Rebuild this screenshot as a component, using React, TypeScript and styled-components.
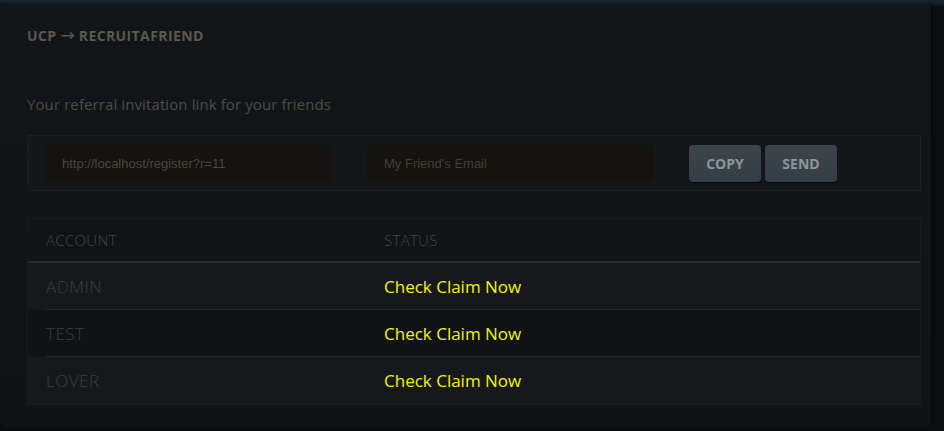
import React, { useState } from 'react';
import styled, { createGlobalStyle } from 'styled-components';

const GlobalStyle = createGlobalStyle`
  html, body {
    margin: 0;
    padding: 0;
    background: #0c0f11;
  }
  * {
    box-sizing: border-box;
  }
`;

const Page = styled.div`
  width: 944px;
  height: 431px;
  overflow: hidden;
  background: linear-gradient(180deg, #1a2631 0px, #131c24 5px, #0c0f11 6px);
  padding-top: 5px;
  font-family: 'Open Sans', 'Liberation Sans', sans-serif;
`;

const Panel = styled.div`
  width: 931px;
  height: 423px;
  padding: 21px 10px 0 27px;
  background: linear-gradient(180deg, #121619 0%, #111417 60%, #101315 100%);
  border-bottom-left-radius: 8px;
  border-bottom-right-radius: 8px;
  box-shadow: 2px 0 6px rgba(0, 0, 0, 0.45);
`;

const Breadcrumb = styled.h2`
  margin: 0;
  display: flex;
  align-items: center;
  gap: 4px;
  font-size: 14px;
  line-height: 19px;
  font-weight: 700;
  color: #5d584c;
  letter-spacing: 0.4px;
`;

const Arrow = styled.span`
  font-family: 'DejaVu Sans', sans-serif;
  font-weight: 400;
  font-size: 17px;
  letter-spacing: 0;
`;

const Intro = styled.p`
  margin: 49px 0 0;
  font-size: 15px;
  line-height: 20px;
  color: #4f4b42;
  letter-spacing: 0.1px;
`;

const LinkBox = styled.div`
  margin-top: 21px;
  height: 56px;
  display: flex;
  align-items: center;
  gap: 35px;
  padding: 0 17px;
  background: #13171a;
  border: 1px solid #1a1f24;
`;

const Field = styled.input`
  width: 287px;
  height: 37px;
  padding: 0 17px;
  border: none;
  border-radius: 4px;
  background: #15130f;
  color: #4b4740;
  font-family: 'Liberation Sans', Arial, sans-serif;
  font-size: 13px;
  outline: none;

  &::placeholder {
    color: #403d37;
  }
`;

const Actions = styled.div`
  display: flex;
  gap: 4px;
`;

const Button = styled.button`
  width: 72px;
  height: 37px;
  border: none;
  border-radius: 4px;
  background: linear-gradient(180deg, #3b454b 0%, #353e44 100%);
  box-shadow: 0 1px 1px rgba(0, 0, 0, 0.5);
  color: #8b959a;
  font-family: 'Open Sans', 'Liberation Sans', sans-serif;
  font-size: 14px;
  font-weight: 700;
  cursor: pointer;
`;

const Table = styled.div`
  margin-top: 27px;
  width: 894px;
  background: #111416;
  border: 1px solid #171b1f;
`;

const HeadRow = styled.div`
  display: grid;
  grid-template-columns: 338px 1fr;
  height: 44px;
  align-items: center;
  padding-left: 18px;
  border-bottom: 2px solid #252a2e;
`;

const HeadCell = styled.div`
  font-size: 15px;
  font-weight: 300;
  color: #4a463f;
  letter-spacing: 0.3px;
`;

const Row = styled.div<{ $shade: boolean; $last: boolean }>`
  display: grid;
  grid-template-columns: 338px 1fr;
  height: 47px;
  align-items: center;
  padding-left: 18px;
  background: ${p => (p.$shade ? '#16191c' : '#101315')};
  position: relative;

  &::after {
    content: '';
    display: ${p => (p.$last ? 'none' : 'block')};
    position: absolute;
    left: 18px;
    right: 0;
    bottom: 0;
    height: 1px;
    background: #24282c;
  }
`;

const Account = styled.div`
  font-size: 17px;
  font-weight: 300;
  color: #3f3d38;
  letter-spacing: 0.5px;
`;

const Claim = styled.a`
  font-size: 17px;
  font-weight: 400;
  color: #f4f400;
  text-decoration: none;
  cursor: pointer;
`;

const accounts = ['ADMIN', 'TEST', 'LOVER'];

const App: React.FC = () => {
  const [email, setEmail] = useState('');

  return (
    <>
      <GlobalStyle />
      <Page>
        <Panel>
          <Breadcrumb>
            UCP <Arrow>→</Arrow> RECRUITAFRIEND
          </Breadcrumb>
          <Intro>Your referral invitation link for your friends</Intro>

          <LinkBox>
            <Field readOnly value="http://localhost/register?r=11" />
            <Field
              placeholder="My Friend's Email"
              value={email}
              onChange={e => setEmail(e.target.value)}
            />
            <Actions>
              <Button>COPY</Button>
              <Button>SEND</Button>
            </Actions>
          </LinkBox>

          <Table>
            <HeadRow>
              <HeadCell>ACCOUNT</HeadCell>
              <HeadCell>STATUS</HeadCell>
            </HeadRow>
            {accounts.map((name, i) => (
              <Row key={name} $shade={i % 2 === 0} $last={i === accounts.length - 1}>
                <Account>{name}</Account>
                <Claim>Check Claim Now</Claim>
              </Row>
            ))}
          </Table>
        </Panel>
      </Page>
    </>
  );
};

export default App;
